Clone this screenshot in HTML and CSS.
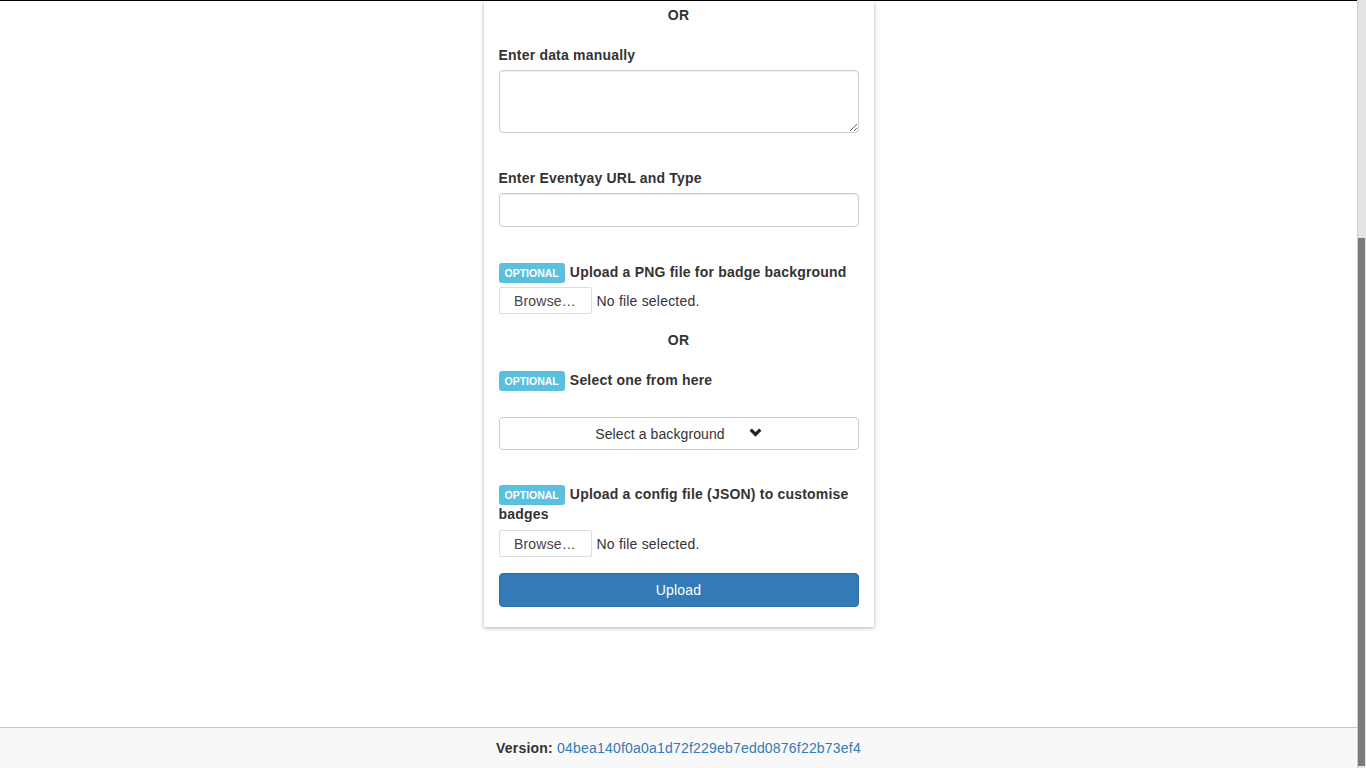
FILE: index.html
```html
<!DOCTYPE html>
<html lang="en">
<head>
    <meta charset="UTF-8">
    <meta name="viewport" content="width=device-width, initial-scale=1.0">
    <title>Badge Generator</title>
    <link rel="stylesheet" href="styles.css">
</head>
<body>

    <div class="page">
        <div class="main">
            <form class="card">
                <div class="or">OR</div>

                <label class="field-label first">Enter data manually</label>
                <textarea class="form-control textarea"></textarea>

                <label class="field-label gap-lg">Enter Eventyay URL and Type</label>
                <input type="text" class="form-control">

                <label class="field-label gap-lg"><span class="badge">OPTIONAL</span> Upload a PNG file for badge background</label>
                <div class="file-row">
                    <button type="button" class="browse">Browse…</button>
                    <span class="file-name">No file selected.</span>
                </div>

                <div class="or or-second">OR</div>

                <label class="field-label gap-md"><span class="badge">OPTIONAL</span> Select one from here</label>
                <button type="button" class="select-bg">
                    <span>Select a background</span>
                    <svg class="chevron" width="13" height="9" viewBox="0 0 13 9">
                        <polyline points="1.7,1.7 6.5,6.5 11.3,1.7" fill="none" stroke="#222" stroke-width="3.2" stroke-linejoin="miter"/>
                    </svg>
                </button>

                <label class="field-label gap-config"><span class="badge">OPTIONAL</span> Upload a config file (JSON) to customise badges</label>
                <div class="file-row">
                    <button type="button" class="browse">Browse…</button>
                    <span class="file-name">No file selected.</span>
                </div>

                <button type="button" class="btn-upload">Upload</button>
            </form>
        </div>

        <footer class="footer">
            <b>Version:</b> <a href="#">04bea140f0a0a1d72f229eb7edd0876f22b73ef4</a>
        </footer>
    </div>

    <!-- page is shown scrolled to the bottom -->
    <div class="scrollbar"><div class="thumb"></div></div>

</body>
</html>
```

FILE: styles.css
```css
html, body {
    margin: 0;
    padding: 0;
    height: 100%;
    overflow: hidden;
}
body {
    font-family: "Liberation Sans", Arial, sans-serif;
    font-size: 14px;
    line-height: 20px;
    letter-spacing: 0.2px;
    color: #333;
    background-color: #fff;
}
.page {
    height: 768px;
    margin-right: 9px;
    border-top: 1px solid #000;
    box-sizing: border-box;
    display: flex;
    flex-direction: column;
}
.main {
    flex: 1;
}
.card {
    width: 390px;
    margin: 0 auto;
    padding: 4px 15px 20px;
    box-sizing: border-box;
    background-color: #fff;
    box-shadow: 0 1px 4px rgba(0, 0, 0, 0.3);
    display: flex;
    flex-direction: column;
}
.or {
    text-align: center;
    font-weight: bold;
}
.or-second {
    margin-top: 16px;
}
.field-label {
    display: block;
    font-weight: bold;
    margin-bottom: 5px;
}
.field-label.first {
    margin-top: 20px;
}
.field-label.gap-lg {
    margin-top: 35px;
}
.field-label.gap-md {
    margin-top: 20px;
    margin-bottom: 27px;
}
.field-label.gap-config {
    margin-top: 34px;
    margin-bottom: 6px;
}
.badge {
    display: inline-block;
    height: 20px;
    line-height: 21px;
    padding: 0 6px;
    margin-right: 1px;
    font-size: 10.5px;
    font-weight: bold;
    letter-spacing: 0;
    color: #fff;
    background-color: #5bc0de;
    border-radius: 3px;
    vertical-align: top;
    position: relative;
    top: 1px;
}
.form-control {
    display: block;
    width: 100%;
    height: 34px;
    padding: 6px 12px;
    font-family: inherit;
    font-size: 14px;
    color: #555;
    background-color: #fff;
    border: 1px solid #ccc;
    border-radius: 4px;
    box-shadow: inset 0 1px 1px rgba(0, 0, 0, 0.075);
    box-sizing: border-box;
    margin: 0;
}
.textarea {
    height: 63px;
    resize: vertical;
}
.file-row {
    display: flex;
    align-items: center;
    gap: 5px;
}
.browse {
    width: 93px;
    height: 27px;
    padding: 0;
    font-family: inherit;
    font-size: 14px;
    letter-spacing: 0.2px;
    color: #444;
    background-color: #fff;
    border: 1px solid #ddd;
    border-radius: 2px;
}
.file-name {
    color: #333;
}
.select-bg {
    height: 33px;
    width: 100%;
    padding: 0;
    font-family: inherit;
    font-size: 14px;
    letter-spacing: 0.1px;
    color: #333;
    background-color: #fff;
    border: 1px solid #ccc;
    border-radius: 4px;
    display: flex;
    justify-content: center;
    align-items: center;
    gap: 24px;
}
.chevron {
    display: block;
    margin-top: -2px;
}
.btn-upload {
    margin-top: 16px;
    height: 34px;
    width: 100%;
    font-family: inherit;
    font-size: 14px;
    letter-spacing: 0.2px;
    color: #fff;
    background-color: #337ab7;
    border: 1px solid #2e6da4;
    border-radius: 4px;
}
.footer {
    height: 41px;
    box-sizing: border-box;
    border-top: 1px solid #c8c8c8;
    background-color: #f8f8f8;
    text-align: center;
    padding-top: 10px;
}
.footer a {
    color: #337ab7;
    text-decoration: none;
}
.scrollbar {
    position: fixed;
    top: 0;
    right: 0;
    width: 9px;
    height: 768px;
    background-color: #e3e3e3;
    border-left: 1px solid #cfcfcf;
    box-sizing: border-box;
}
.thumb {
    position: absolute;
    top: 238px;
    left: 0;
    width: 7px;
    height: 528px;
    background-color: #7b7b7b;
}
```
